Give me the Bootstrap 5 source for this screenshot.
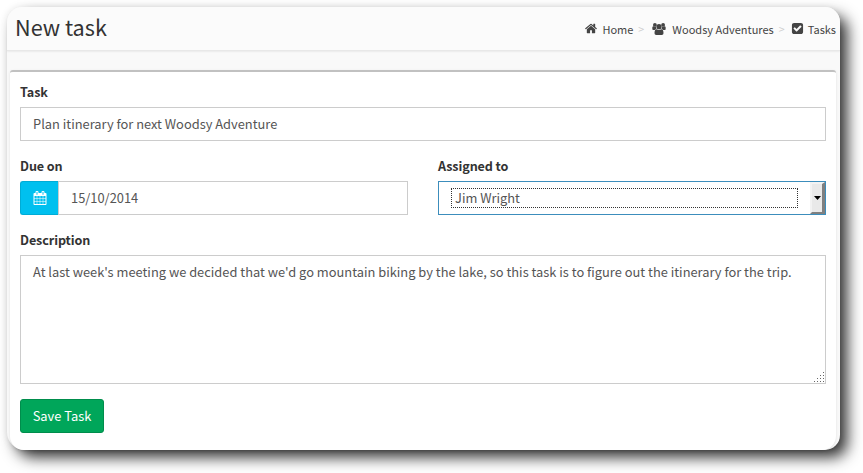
<!DOCTYPE html>
<html lang="en">
<head>
<meta charset="utf-8">
<title>New task</title>
<link href="https://cdn.jsdelivr.net/npm/bootstrap@5.3.0/dist/css/bootstrap.min.css" rel="stylesheet">
<style>
body{font-family:"Noto Sans CJK SC","Noto Sans",sans-serif;font-size:12.87px;line-height:20px;color:#333;background:#fff;min-height:473px;display:flow-root}
.window{width:833px;height:443px;margin:7px 0 0 7px;border-radius:15px 15px 15px 18px;background:#f9f9f9;box-shadow:8px 8px 15px -1px #2b2b2b,-1px 0 7px rgba(0,0,0,.05)}
.page-head{height:44px;padding:0 4px 0 8px;border-radius:15px 15px 0 0;background:#fbfbfb;border-bottom:1px solid #e8e8e8;box-shadow:0 1px 2px rgba(0,0,0,.06)}
.page-head h1{font-size:21.65px;line-height:26px;font-weight:400;margin-top:-3px}
.crumbs{font-size:11px;color:#444;white-space:nowrap}
.crumbs svg{fill:#444;display:block}
.sep{color:#ccc;font-size:10.5px;width:6px;margin:0 6px 0 5px}
.sep-wide{margin-right:8px}
.group-name{margin-left:6px}
.page-name{margin-left:4px}
.box{margin:19px 4px 0 3px;height:380px;border-top:2px solid #c1c1c1;border-radius:3px 3px 14px 14px;background:#fff;padding:10px;box-shadow:0 1px 3px rgba(0,0,0,.1)}
.form-label{font-size:12.6px;letter-spacing:-.1px;font-weight:700;line-height:20px;margin:0 0 5px;display:block}
.form-control,.form-control:focus{height:34px;border:1px solid #ccc;border-radius:0;padding:6px 12px;font-size:12.87px;line-height:20px;color:#555;box-shadow:none}
input.form-control{padding:5px 12px 7px}
.group-row{margin-top:15px}
.half-gap{gap:30px}
.cal{width:38px;height:34px;background:#00c0ef;border:1px solid #00acd6;border-right:0;border-radius:3px 0 0 3px}
.cal svg{fill:#fff}
.assignee.form-control{border-color:#3c8dbc;padding:0 0 0 12px}
.focus-line{height:20px;border:1px dotted #333;line-height:18px;padding-left:3px;margin-right:12px}
.drop{width:15px;height:32px;background:#e9e9e9;border:2px solid;border-color:#f3f3f3 #808080 #808080 #f3f3f3;border-right-width:3px}
.form-control.notes{height:129px;resize:none;overflow:hidden;display:block}
.grip{right:1px;bottom:1px}
.save{width:84px;height:34px;padding:0;margin-top:15px;background:#00a65a;border:1px solid #008d4c;border-radius:3px;color:#fff;font-size:12.87px;line-height:20px}
</style>
</head>
<body>
<main class="window">
<header class="page-head d-flex align-items-center justify-content-between">
<h1 class="mb-0">New task</h1>
<nav class="crumbs d-flex align-items-center" aria-label="Breadcrumb">
<svg class="me-1" width="14" height="13" viewBox="0 0 1792 1792"><path d="M1472 992v480q0 26-19 45t-45 19h-384v-384h-256v384h-384q-26 0-45-19t-19-45v-480q0-1 .5-3t.5-3l575-474 575 474q1 2 1 6zm223-69l-62 74q-8 9-21 11h-3q-13 0-21-7l-692-577-692 577q-12 8-24 7-13-2-21-11l-62-74q-8-10-7-23.5t11-21.5l719-599q32-26 76-26t76 26l244 204v-195q0-14 9-23t23-9h192q14 0 23 9t9 23v408l219 182q10 8 11 21.5t-7 23.5z"/></svg>
<span>Home</span><span class="sep sep-wide">&gt;</span>
<svg width="14" height="12" viewBox="0 0 14 12"><circle cx="2.9" cy="1.9" r="1.9"/><circle cx="11.1" cy="1.9" r="1.9"/><circle cx="7" cy="3.7" r="2.6"/><path d="M.3 6.2Q0 3 1.3 3.3q1.3.8 2.6.2Q3.9 5 4.5 5.8 3.400 6 2.800 7H1.300Q.4 7 .3 6.200zM13.700 6.200Q14 3 12.700 3.300q-1.300.8-2.600.2Q10.100 5 9.500 5.800q1.100.2 1.700 1.200h1.500q.9 0 1-.8zM2.500 10.200q0-3.900 2.100-4 2.400 1.500 4.800 0 2.100.1 2.100 4 0 1.800-1.700 1.800H4.200q-1.700 0-1.700-1.800z"/></svg>
<span class="group-name">Woodsy Adventures</span><span class="sep">&gt;</span>
<svg width="13" height="13" viewBox="0 0 1792 1792"><path d="M813 1299l614-614q19-19 19-45t-19-45l-102-102q-19-19-45-19t-45 19l-467 467-211-211q-19-19-45-19t-45 19l-102 102q-19 19-19 45t19 45l358 358q19 19 45 19t45-19zm851-883v960q0 119-84.500 203.500t-203.500 84.500h-960q-119 0-203.500-84.500t-84.500-203.500v-960q0-119 84.500-203.500t203.500-84.500h960q119 0 203.500 84.500t84.500 203.500z"/></svg>
<span class="page-name">Tasks</span>
</nav>
</header>
<section class="box">
<label class="form-label" for="task">Task</label>
<input class="form-control" id="task" value="Plan itinerary for next Woodsy Adventure">
<div class="group-row d-flex half-gap">
<div class="flex-fill w-50">
<label class="form-label" for="due">Due on</label>
<div class="d-flex">
<span class="cal flex-shrink-0 d-flex align-items-center justify-content-center"><svg width="14" height="14" viewBox="0 0 1792 1792"><path d="M192 1664h288v-288h-288v288zm352 0h320v-288h-320v288zm-352-352h288v-320h-288v320zm352 0h320v-320h-320v320zm-352-384h288v-288h-288v288zm736 736h320v-288h-320v288zm-384-736h320v-288h-320v288zm768 736h288v-288h-288v288zm-384-352h320v-320h-320v320zm-352-864v-288q0-13-9.500-22.500t-22.500-9.500h-64q-13 0-22.500 9.500t-9.500 22.500v288q0 13 9.500 22.500t22.500 9.500h64q13 0 22.500-9.500t9.500-22.500zm736 864h288v-320h-288v320zm-384-384h320v-288h-320v288zm384 0h288v-288h-288v288zm32-480v-288q0-13-9.500-22.500t-22.500-9.500h-64q-13 0-22.500 9.500t-9.500 22.500v288q0 13 9.500 22.500t22.500 9.500h64q13 0 22.500-9.500t9.500-22.500zm384-64v1280q0 52-38 90t-90 38h-1408q-52 0-90-38t-38-90v-1280q0-52 38-90t90-38h128v-96q0-66 47-113t113-47h64q66 0 113 47t47 113v96h384v-96q0-66 47-113t113-47h64q66 0 113 47t47 113v96h128q52 0 90 38t38 90z"/></svg></span>
<input class="form-control" id="due" value="15/10/2014">
</div>
</div>
<div class="flex-fill w-50">
<span class="form-label">Assigned to</span>
<div class="form-control assignee d-flex align-items-center" role="combobox" tabindex="0">
<span class="focus-line flex-fill">Jim Wright</span>
<span class="drop d-flex align-items-center justify-content-center"><svg width="7" height="4" viewBox="0 0 7 4"><path d="M0 0h7L3.500 4z"/></svg></span>
</div>
</div>
</div>
<div class="group-row position-relative">
<label class="form-label" for="notes">Description</label>
<textarea class="form-control notes" id="notes">At last week's meeting we decided that we'd go mountain biking by the lake, so this task is to figure out the itinerary for the trip.</textarea>
<svg class="grip position-absolute" width="11" height="11" viewBox="0 0 11 11" fill="#666"><path d="M9 0h1v1H9zM6 3h1v1H6zM9 3h1v1H9zM3 6h1v1H3zM6 6h1v1H6zM9 6h1v1H9zM0 9h1v1H0zM3 9h1v1H3zM6 9h1v1H6zM9 9h1v1H9z"/></svg>
</div>
<button class="btn save d-block" type="button">Save Task</button>
</section>
</main>
<script src="https://cdn.jsdelivr.net/npm/bootstrap@5.3.0/dist/js/bootstrap.bundle.min.js"></script>
</body>
</html>
